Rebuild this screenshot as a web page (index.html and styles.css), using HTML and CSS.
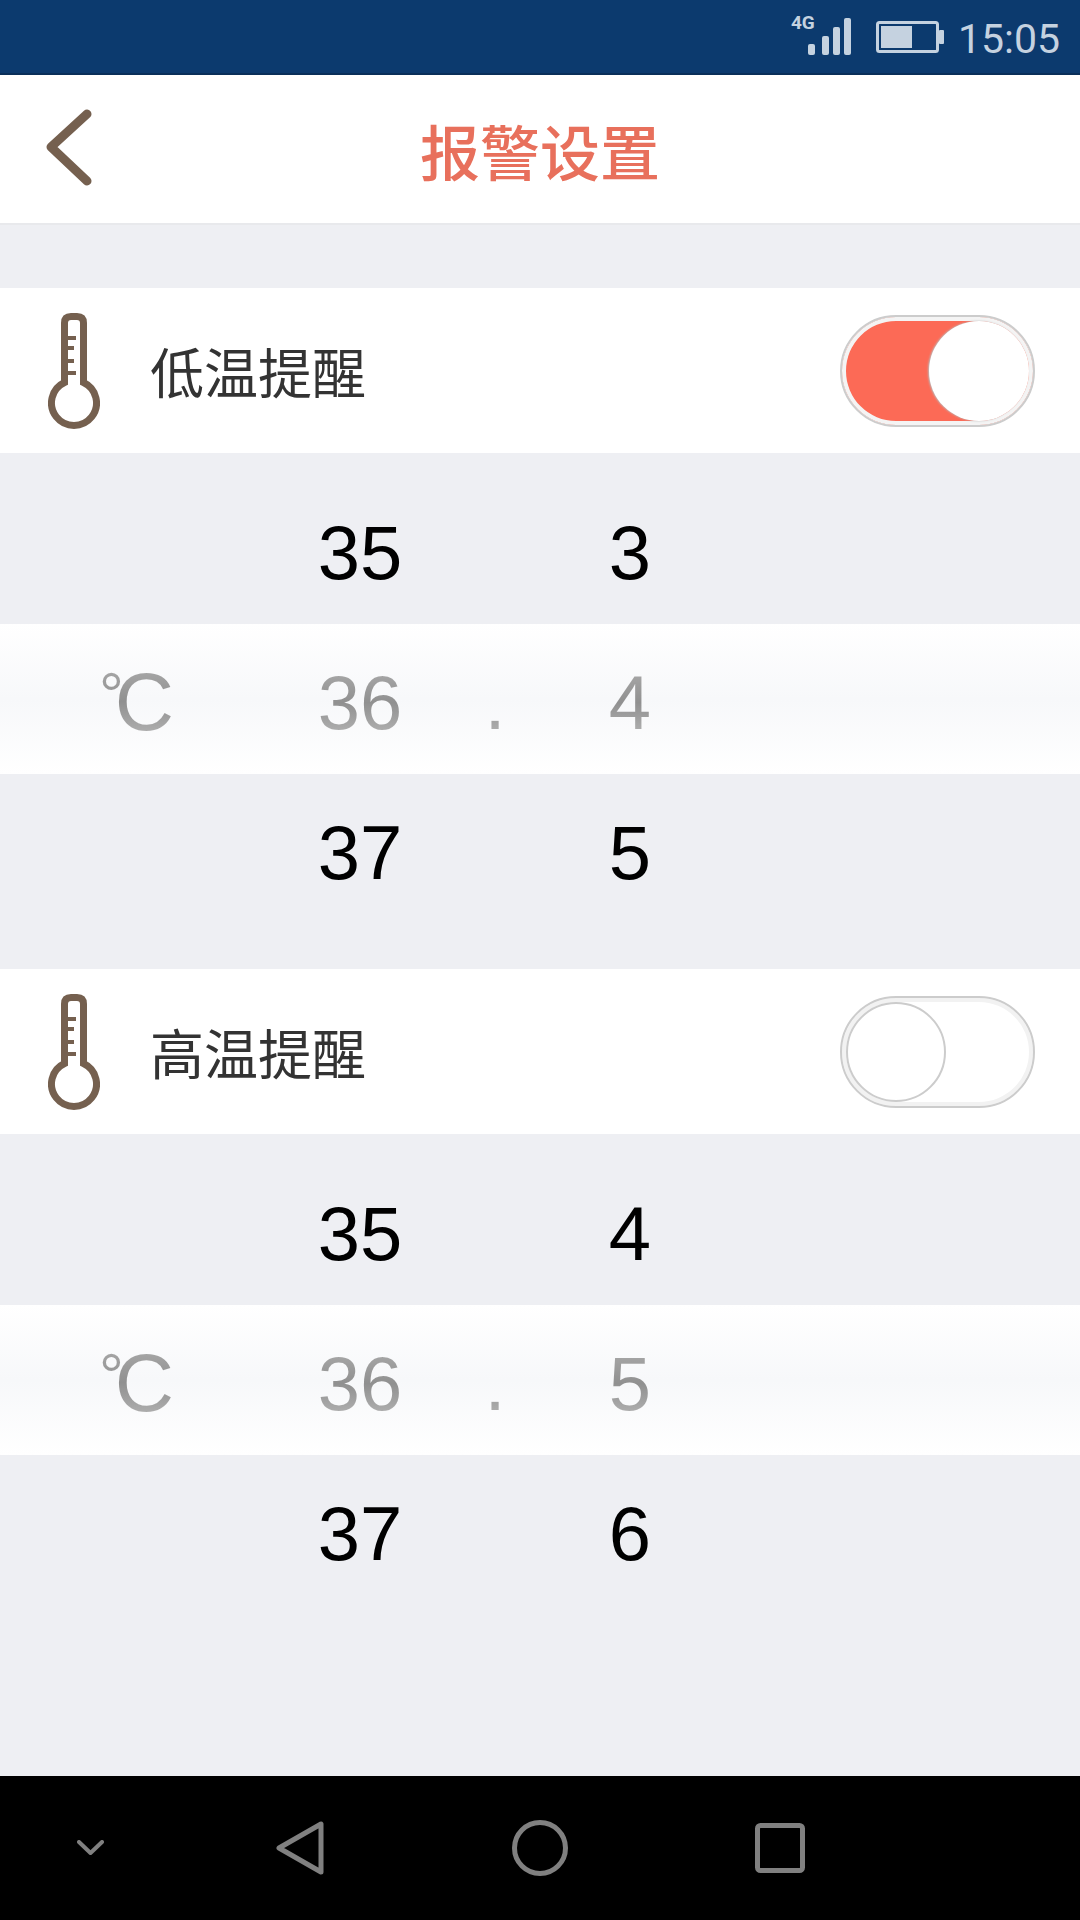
FILE: index.html
```html
<!DOCTYPE html>
<html lang="zh-CN">
<head>
    <meta charset="UTF-8">
    <meta name="viewport" content="width=device-width, initial-scale=1.0">
    <title>报警设置</title>
    <link rel="stylesheet" href="styles.css">
</head>

<body>
    <div class="statusbar">
        <div class="signal">
            <span class="net">4G</span>
            <svg width="45" height="40" viewBox="0 0 45 40">
                <g fill="#c5d2e0">
                    <rect x="2" y="28" width="7" height="11" rx="2"/>
                    <rect x="16" y="20" width="7" height="19" rx="2"/>
                    <rect x="27" y="11" width="7" height="28" rx="2"/>
                    <rect x="38" y="2" width="7" height="37" rx="2"/>
                </g>
            </svg>
        </div>
        <svg class="battery" width="68" height="32" viewBox="0 0 68 32">
            <rect x="1.5" y="1.5" width="60" height="29" rx="2" fill="none" stroke="#c5d2e0" stroke-width="3"/>
            <rect x="5" y="5" width="31" height="22" fill="#c5d2e0"/>
            <rect x="63" y="9" width="5" height="14" rx="1" fill="#c5d2e0"/>
        </svg>
        <span class="time">15:05</span>
    </div>

    <header class="topbar">
        <svg class="back" width="48" height="80" viewBox="0 0 48 80">
            <path d="M43 5 L7 38 L43 72" fill="none" stroke="#75604f" stroke-width="9" stroke-linecap="round" stroke-linejoin="round"/>
        </svg>
        <h1 class="title">报警设置</h1>
    </header>

    <main class="content">
        <section class="alarm alarm-low">
            <div class="alarm-head">
                <svg class="thermo" width="52" height="116" viewBox="0 0 52 116">
                    <path d="M16.500 69.500 L16.500 10 Q16.500 3.500 23 3.500 L29 3.500 Q35.500 3.500 35.500 10 L35.500 69.500 A22.500 22.500 0 1 1 16.500 69.500 Z" fill="none" stroke="#75604f" stroke-width="7"/>
                    <path d="M17 25 H28 M17 35 H26 M17 48 H26 M17 60 H28" stroke="#75604f" stroke-width="4"/>
                </svg>
                <span class="alarm-name">低温提醒</span>
                <div class="switch switch-on"><span class="knob"></span></div>
            </div>
            <div class="picker">
                <div class="wheel-row">
                    <span class="unit"></span><span class="num">35</span><span class="dot"></span><span class="num">3</span>
                </div>
                <div class="wheel-row wheel-mid">
                    <span class="unit"><b><span class="deg">°</span>C</b></span><span class="num"><b>36</b></span><span class="dot"><b>.</b></span><span class="num"><b>4</b></span>
                </div>
                <div class="wheel-row">
                    <span class="unit"></span><span class="num">37</span><span class="dot"></span><span class="num">5</span>
                </div>
            </div>
        </section>

        <section class="alarm alarm-high">
            <div class="alarm-head">
                <svg class="thermo" width="52" height="116" viewBox="0 0 52 116">
                    <path d="M16.500 69.500 L16.500 10 Q16.500 3.500 23 3.500 L29 3.500 Q35.500 3.500 35.500 10 L35.500 69.500 A22.500 22.500 0 1 1 16.500 69.500 Z" fill="none" stroke="#75604f" stroke-width="7"/>
                    <path d="M17 25 H28 M17 35 H26 M17 48 H26 M17 60 H28" stroke="#75604f" stroke-width="4"/>
                </svg>
                <span class="alarm-name">高温提醒</span>
                <div class="switch"><span class="knob"></span></div>
            </div>
            <div class="picker">
                <div class="wheel-row">
                    <span class="unit"></span><span class="num">35</span><span class="dot"></span><span class="num">4</span>
                </div>
                <div class="wheel-row wheel-mid">
                    <span class="unit"><b><span class="deg">°</span>C</b></span><span class="num"><b>36</b></span><span class="dot"><b>.</b></span><span class="num"><b>5</b></span>
                </div>
                <div class="wheel-row">
                    <span class="unit"></span><span class="num">37</span><span class="dot"></span><span class="num">6</span>
                </div>
            </div>
        </section>
    </main>

    <nav class="navbar">
        <svg width="27" height="16" viewBox="0 0 27 16">
            <path d="M2 2 L13.500 13 L25 2" fill="none" stroke="#808080" stroke-width="4" stroke-linecap="round" stroke-linejoin="round"/>
        </svg>
        <svg width="48" height="54" viewBox="0 0 48 54">
            <path d="M45 3 V51 L3 27 Z" fill="none" stroke="#808080" stroke-width="5" stroke-linejoin="round"/>
        </svg>
        <svg width="56" height="56" viewBox="0 0 56 56">
            <circle cx="28" cy="28" r="25.500" fill="none" stroke="#808080" stroke-width="5"/>
        </svg>
        <svg width="50" height="50" viewBox="0 0 50 50">
            <rect x="2.500" y="2.500" width="45" height="45" rx="3" fill="none" stroke="#808080" stroke-width="5"/>
        </svg>
    </nav>
</body>
</html>
```

FILE: styles.css
```css
* {
  box-sizing: border-box;
}

body {
  margin: 0;
  width: 1080px;
  height: 1920px;
  display: flex;
  flex-direction: column;
  background-color: #eeeff3;
  font-family: "Liberation Sans", "Noto Sans CJK SC", sans-serif;
}

/* status bar */
.statusbar {
  height: 75px;
  background-color: #0c3a6e;
  border-bottom: 2px solid #0a2f59;
  display: flex;
  align-items: flex-start;
  padding-right: 20px;
  justify-content: flex-end;
  color: #c5d2e0;
}

.signal {
  position: relative;
  width: 45px;
  margin: 16px 25px 0 0;
}

.signal svg {
  display: block;
}

.net {
  position: absolute;
  left: -15px;
  top: -5px;
  font: bold 19px Roboto, sans-serif;
}

.battery {
  margin-top: 21px;
  margin-right: 14px;
}

.time {
  font: 41px/1 Roboto, sans-serif;
  margin-top: 19px;
}

/* title bar */
.topbar {
  height: 150px;
  background-color: #fff;
  border-bottom: 2px solid #e8e9ec;
  display: grid;
  grid-template-columns: 1fr auto 1fr;
  align-items: center;
}

.back {
  margin-left: 44px;
}

.title {
  margin: 0;
  font-size: 60px;
  font-weight: 500;
  color: #e8705c;
  grid-column: 2;
}

.content {
  flex: 1;
  padding-top: 63px;
}

/* one alarm block */
.alarm-head {
  height: 165px;
  background-color: #fff;
  display: flex;
  align-items: center;
  padding: 0 45px 0 48px;
}

.alarm-name {
  font-size: 54px;
  color: #333;
  margin-left: 50px;
  flex: 1;
}

.switch {
  width: 195px;
  height: 112px;
  border-radius: 56px;
  border: 2px solid #ccc;
  padding: 4px;
  background-color: #fff;
  background-clip: padding-box;
  box-shadow: inset 0 0 0 4px #f2f2f2;
  display: flex;
}

.knob {
  width: 100px;
  height: 100px;
  border-radius: 50%;
  background-color: #fff;
  border: 2px solid #ccc;
}

.switch-on {
  background-color: #fc6a56;
  box-shadow: inset 0 0 0 4px #f4f4f4;
  justify-content: flex-end;
}

.switch-on .knob {
  border: none;
  box-shadow: -1px 0 2px #bbb;
}

/* number wheels */
.picker {
  padding: 21px 0 45px;
}

.wheel-row {
  height: 150px;
  display: grid;
  grid-template-columns: 270px 180px 90px 180px;
  align-items: center;
  text-align: center;
  font-size: 76px;
  color: #000;
  padding-top: 6px;
}

.wheel-mid {
  background: linear-gradient(#fff, #f7f8fa 50%, #fff);
}

.wheel-mid b {
  font-weight: normal;
  background: linear-gradient(#b0b0b0, #909090 50%, #bcbcbc);
  -webkit-background-clip: text;
  background-clip: text;
  color: transparent;
}

.unit {
  text-align: left;
  padding-left: 99px;
  font-size: 82px;
}

.deg {
  font-size: 62px;
  letter-spacing: -9px;
  vertical-align: 14px;
}

/* bottom nav */
.navbar {
  height: 144px;
  background-color: #000;
  display: grid;
  grid-template-columns: 180px 240px 240px 240px;
  justify-items: center;
  align-items: center;
}
```
